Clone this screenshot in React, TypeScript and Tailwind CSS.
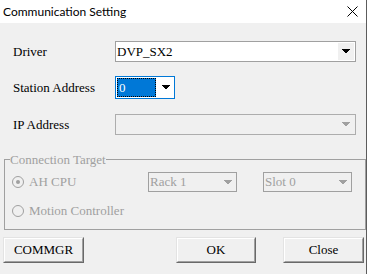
import React from "react";

function Arrow({ color = "#000000" }: { color?: string }) {
  return (
    <svg width="8" height="5" viewBox="0 0 8 5" shapeRendering="crispEdges">
      <polygon points="0,0 8,0 4,5" fill={color} />
    </svg>
  );
}

function Button({ label, className }: { label: string; className: string }) {
  return (
    <div
      className={`h-[26px] flex items-center justify-center bg-[#e1e1e1] border-t border-l border-t-[#e3e3e3] border-l-[#e3e3e3] border-b border-r border-b-[#696969] border-r-[#696969] text-[13px] text-black ${className}`}
    >
      <div className="w-full h-full flex items-center justify-center border-t border-l border-t-white border-l-white border-b border-r border-b-[#a0a0a0] border-r-[#a0a0a0] bg-[#f0f0f0]">
        {label}
      </div>
    </div>
  );
}

export default function App() {
  return (
    <div className="w-[370px] h-[274px] bg-white flex [font-family:'Liberation_Serif','Times_New_Roman',serif] overflow-hidden">
      <div className="w-[367px] h-full flex flex-col border-r border-r-[#5c5c5c]">
        {/* Title bar */}
        <div className="h-[23px] bg-white flex items-center justify-between shrink-0">
          <span className="ml-[3px] text-[12px] text-black [font-family:'Lato','Noto_Sans',sans-serif] leading-none">
            Communication Setting
          </span>
          <svg width="11" height="11" viewBox="0 0 11 11" className="mr-[8px]">
            <path d="M0.5 0.5 L10.5 10.5 M10.5 0.5 L0.5 10.5" stroke="#000" strokeWidth="1" />
          </svg>
        </div>

        {/* Client area */}
        <div className="flex-1 bg-[#f0f0f0] flex flex-col text-[13px]">
          {/* Driver */}
          <div className="mt-[18px] h-[21px] flex items-center">
            <span className="w-[115px] pl-[13px] text-black">Driver</span>
            <div className="w-[241px] h-full bg-white border border-[#a0a0a0] flex items-center">
              <span className="flex-1 pl-[1px] text-black">DVP_SX2</span>
              <div className="w-[16px] h-[17px] mr-[1px] bg-[#f0f0f0] flex items-center justify-center">
                <Arrow />
              </div>
            </div>
          </div>

          {/* Station Address */}
          <div className="mt-[14px] h-[23px] flex items-center">
            <span className="w-[115px] pl-[13px] text-black">Station Address</span>
            <div className="w-[60px] h-full bg-white border border-[#0078d7] flex items-stretch p-[1px]">
              <div className="w-[39px] bg-[#0078d7] border border-dotted border-black text-white flex items-center pl-[1px]">
                0
              </div>
              <div className="flex-1 flex items-center justify-center pl-[2px]">
                <Arrow />
              </div>
            </div>
          </div>

          {/* IP Address */}
          <div className="mt-[15px] h-[21px] flex items-center">
            <span className="w-[115px] pl-[13px] text-black">IP Address</span>
            <div className="w-[241px] h-full bg-[#f0f0f0] border border-[#adadad] flex items-center justify-end pr-[5px]">
              <Arrow color="#a0a0a0" />
            </div>
          </div>

          {/* Connection Target */}
          <fieldset className="mt-[17px] ml-[4px] w-[362px] h-[78px] border border-[#a0a0a0] flex flex-col">
            <legend className="ml-[5px] p-0 text-[#a0a0a0] leading-[15px]">Connection Target</legend>
            <div className="mt-[5px] h-[20px] flex items-center">
              <div className="w-[143px] flex items-center">
                <div className="ml-[7px] w-[12px] h-[12px] rounded-full border border-[#a0a0a0] flex items-center justify-center">
                  <div className="w-[4px] h-[4px] rounded-full bg-[#a0a0a0]" />
                </div>
                <span className="ml-[5px] text-[#a0a0a0]">AH CPU</span>
              </div>
              <div className="w-[89px] h-full border border-[#a0a0a0] flex items-center justify-between pl-[1px] pr-[4px]">
                <span className="text-[#a0a0a0]">Rack 1</span>
                <Arrow color="#a0a0a0" />
              </div>
              <div className="ml-[26px] w-[89px] h-full border border-[#a0a0a0] flex items-center justify-between pl-[1px] pr-[4px]">
                <span className="text-[#a0a0a0]">Slot 0</span>
                <Arrow color="#a0a0a0" />
              </div>
            </div>
            <div className="mt-[11px] h-[16px] flex items-center">
              <div className="ml-[7px] w-[12px] h-[12px] rounded-full border border-[#a0a0a0]" />
              <span className="ml-[5px] text-[#a0a0a0]">Motion Controller</span>
            </div>
          </fieldset>

          {/* Buttons */}
          <div className="mt-[7px] flex">
            <Button label="COMMGR" className="ml-[3px] w-[81px]" />
            <Button label="OK" className="ml-[92px] w-[80px]" />
            <Button label="Close" className="ml-[27px] w-[81px]" />
          </div>
        </div>
      </div>
    </div>
  );
}
